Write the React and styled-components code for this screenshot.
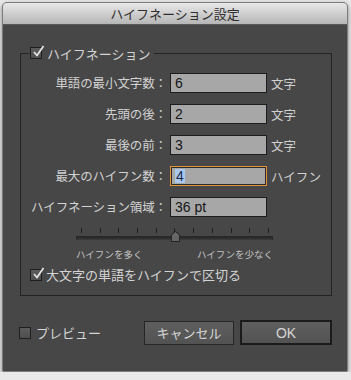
import React from 'react';
import styled, { createGlobalStyle } from 'styled-components';

const Global = createGlobalStyle`
  html, body {
    margin: 0;
    padding: 0;
    background: #e9e9e9;
  }
  body {
    font-family: "Noto Sans CJK JP", "Liberation Sans", sans-serif;
  }
`;

const Window = styled.div`
  margin: 2px 3px 0 2px;
  width: 346px;
  height: 370px;
  box-sizing: border-box;
  border: 1px solid #7c7c7c;
  border-radius: 5px 5px 2px 2px;
  overflow: hidden;
  background: #474747;
  box-shadow: 0 2px 5px rgba(0, 0, 0, 0.45);
  display: flex;
  flex-direction: column;
`;

const TitleBar = styled.div`
  height: 21px;
  flex: none;
  display: flex;
  align-items: center;
  justify-content: center;
  background: linear-gradient(#e8e8e8, #b6b6b6);
  border-bottom: 1px solid #5a5a5a;
  color: #2e2e2e;
  font-size: 13px;
  line-height: 21px;
`;

const Body = styled.div`
  flex: 1;
  padding: 20px 15px 0 17px;
  display: flex;
  flex-direction: column;
`;

const Group = styled.fieldset`
  margin: 0;
  padding: 12px 10px 13px 8px;
  border: 1px solid #242424;
  width: 312px;
  box-sizing: border-box;
`;

const Legend = styled.legend`
  padding: 0 4px 0 1px;
  display: flex;
  align-items: center;
  gap: 5px;
  height: 16px;
  font-size: 13px;
  color: #d4d4d4;
`;

const CheckBox = styled.span`
  width: 12px;
  height: 12px;
  box-sizing: border-box;
  border: 1px solid #1f1f1f;
  background: linear-gradient(#5c5c5c, #4f4f4f);
  display: inline-flex;
  align-items: center;
  justify-content: center;
  flex: none;
  position: relative;
  svg {
    position: absolute;
    left: 1px;
    top: -3px;
  }
`;

const Fields = styled.div`
  display: grid;
  grid-template-columns: 138px 97px auto;
  column-gap: 3px;
  row-gap: 11px;
  align-items: center;
`;

const Label = styled.div`
  text-align: right;
  font-size: 12.5px;
  line-height: 20px;
  color: #d2d2d2;
  white-space: nowrap;
  letter-spacing: -0.1px;
`;

const Field = styled.div`
  height: 20px;
  box-sizing: border-box;
  border: 1px solid ${p => (p.$focused ? '#e3923a' : '#1d1d1d')};
  box-shadow: ${p => (p.$focused ? 'inset 0 0 0 1px #2c2c2c' : 'none')};
  background: #a7a7a7;
  display: flex;
  align-items: center;
  padding-left: 4px;
  font-family: "Liberation Sans", Arial, sans-serif;
  font-size: 14px;
  color: #161616;
`;

const Selected = styled.span`
  background: #a9c9ef;
  color: #1a2a4a;
  padding: 0 1px;
  line-height: 14px;
`;

const Unit = styled.div`
  font-size: 12.5px;
  color: #cfcfcf;
  padding-left: 1px;
  white-space: nowrap;
`;

const Slider = styled.div`
  margin: 11px 0 0 47px;
  width: 197px;
`;

const Ticks = styled.div`
  display: flex;
  justify-content: space-between;
  padding: 0 4px 0 5px;
  height: 5px;
  span {
    width: 1px;
    background: #1f1f1f;
  }
`;

const Track = styled.div`
  position: relative;
  margin-top: 3px;
  height: 4px;
  box-sizing: border-box;
  background: #2e2e2e;
  border: 1px solid #262626;
  border-bottom-color: #3a3a3a;
  svg {
    position: absolute;
    top: -6px;
  }
`;

const SliderLabels = styled.div`
  margin-top: 8px;
  display: flex;
  justify-content: space-between;
  font-size: 9.5px;
  line-height: 12px;
  color: #c4c4c4;
`;

const CheckRow = styled.label`
  display: flex;
  align-items: center;
  gap: 4px;
  margin: 8px 0 0 1px;
  font-size: 13px;
  line-height: 14px;
  color: #d4d4d4;
`;

const Footer = styled.div`
  margin-top: 24px;
  display: flex;
  align-items: center;
  margin-left: -1px;
`;

const Preview = styled(CheckRow)`
  margin: 0;
  gap: 5px;
  flex: 1;
`;

const Button = styled.div`
  height: ${p => (p.$primary ? '25px' : '24px')};
  width: ${p => (p.$primary ? '92px' : '90px')};
  box-sizing: border-box;
  border: ${p => (p.$primary ? '2px solid #1b1b1b' : '1px solid #262626')};
  background: linear-gradient(#5f5f5f, #525252);
  display: flex;
  align-items: center;
  justify-content: center;
  color: #d6d6d6;
  font-size: ${p => (p.$primary ? '14px' : '13px')};
  font-family: ${p =>
    p.$primary ? '"Liberation Sans", Arial, sans-serif' : 'inherit'};
  margin-left: ${p => (p.$primary ? '6px' : '0')};
`;

const Check = () => (
  <svg width="13" height="13" viewBox="0 0 13 13">
    <path
      d="M2 7 L5 10.5 L11.5 1"
      fill="none"
      stroke="#e2e2e2"
      strokeWidth="1.8"
      strokeLinejoin="round"
    />
  </svg>
);

const Thumb = ({ left }) => (
  <svg width="9" height="11" viewBox="0 0 9 11" style={{ left }}>
    <path d="M0.5 4 L4.5 0.5 L8.5 4 L8.5 10.5 L0.5 10.5 Z" fill="#666" stroke="#222" />
  </svg>
);

const fields = [
  { label: '単語の最小文字数：', value: '6', unit: '文字' },
  { label: '先頭の後：', value: '2', unit: '文字' },
  { label: '最後の前：', value: '3', unit: '文字' },
  { label: '最大のハイフン数：', value: '4', unit: 'ハイフン', focused: true },
  { label: 'ハイフネーション領域：', value: '36 pt', unit: '' },
];

const App = () => {
  return (
    <>
      <Global />
      <Window>
        <TitleBar>ハイフネーション設定</TitleBar>
        <Body>
          <Group>
            <Legend>
              <CheckBox>
                <Check />
              </CheckBox>
              ハイフネーション
            </Legend>
            <Fields>
              {fields.map(f => (
                <React.Fragment key={f.label}>
                  <Label>{f.label}</Label>
                  <Field $focused={f.focused}>
                    {f.focused ? <Selected>{f.value}</Selected> : f.value}
                  </Field>
                  <Unit>{f.unit}</Unit>
                </React.Fragment>
              ))}
            </Fields>
            <Slider>
              <Ticks>
                {Array.from({ length: 11 }).map((_, i) => (
                  <span key={i} />
                ))}
              </Ticks>
              <Track>
                <Thumb left={94} />
              </Track>
              <SliderLabels>
                <span>ハイフンを多く</span>
                <span>ハイフンを少なく</span>
              </SliderLabels>
            </Slider>
            <CheckRow>
              <CheckBox>
                <Check />
              </CheckBox>
              大文字の単語をハイフンで区切る
            </CheckRow>
          </Group>
          <Footer>
            <Preview>
              <CheckBox />
              プレビュー
            </Preview>
            <Button>キャンセル</Button>
            <Button $primary>OK</Button>
          </Footer>
        </Body>
      </Window>
    </>
  );
};

export default App;
